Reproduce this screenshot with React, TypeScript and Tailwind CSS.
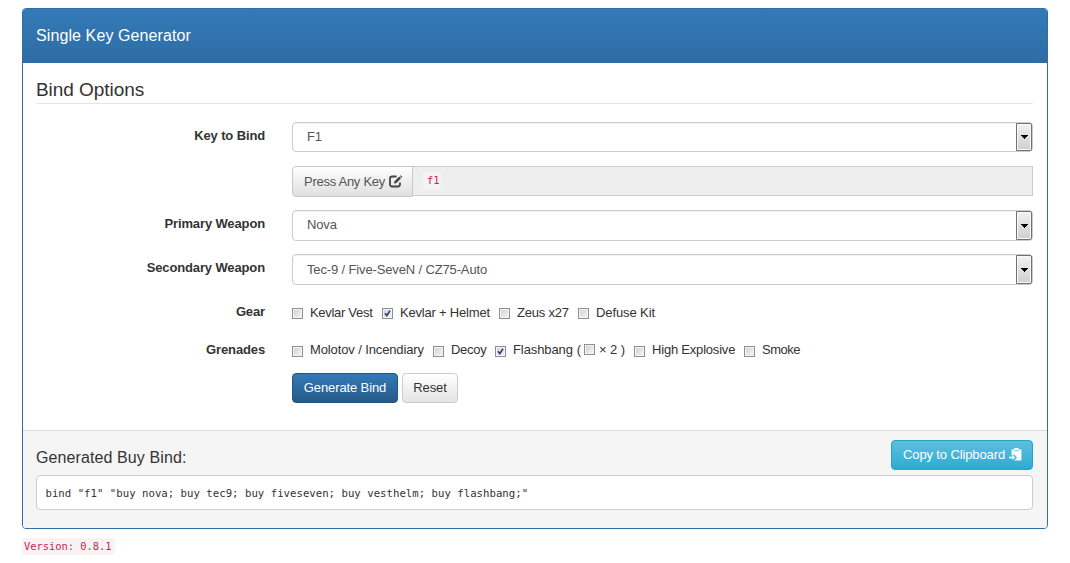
import * as React from "react";
import { clsx } from "clsx";

type Option = {
  label: string;
  width: string;
  tracking?: string;
  checked?: boolean;
};

const GEAR: Option[] = [
  { label: "Kevlar Vest", width: "w-[90px]", tracking: "tracking-[-0.3px]" },
  { label: "Kevlar + Helmet", width: "w-[117px]", tracking: "tracking-[-0.2px]", checked: true },
  { label: "Zeus x27", width: "w-[79px]", tracking: "tracking-[-0.2px]" },
  { label: "Defuse Kit", width: "w-[90px]", tracking: "tracking-[-0.1px]" },
];

const GRENADES: Option[] = [
  { label: "Molotov / Incendiary", width: "w-[141px]", tracking: "tracking-[-0.12px]" },
  { label: "Decoy", width: "w-[62px]", tracking: "tracking-[-0.3px]" },
  { label: "Flashbang", width: "w-[139px]", tracking: "tracking-[-0.1px]", checked: true },
  { label: "High Explosive", width: "w-[110px]", tracking: "tracking-[-0.2px]" },
  { label: "Smoke", width: "w-[70px]", tracking: "tracking-[-0.5px]" },
];

export default function App() {
  return (
    <main className="h-[563px] w-[1070px] overflow-hidden bg-white pt-2 pl-[22px] font-['Liberation_Sans',Arial,sans-serif] text-[13px] leading-[18px] text-[#333]">
      <section className="h-[521px] w-[1026px] overflow-hidden rounded-[4px] border border-[#2f6da4]">
        <header className="h-[54px] bg-linear-to-b from-[#337ab7] to-[#2e6da4] px-[13px] pt-[17px] text-[16px] leading-5 tracking-[0.1px] text-white">
          Single Key Generator
        </header>

        <div className="h-[367px] bg-white px-[13px] pt-[15px]">
          <h2 className="h-[26px] w-[997px] border-b border-[#e5e5e5] text-[19px] leading-[24px] tracking-[-0.05px]">
            Bind Options
          </h2>

          <Row label="Key to Bind" className="mt-[18px] h-[30px]">
            <Select value="F1" />
          </Row>
          <Row className="mt-[14px] h-[31px]">
            <div className="flex items-start">
              <button className="flex h-[31px] w-[121px] items-center rounded-l-[4px] border border-[#c8c8c8] bg-linear-to-b from-white to-[#e0e0e0] pl-[11px] text-[#555]">
                <span className="w-[85px] text-left tracking-[-0.27px] whitespace-nowrap">
                  Press Any Key
                </span>
                <EditIcon />
              </button>
              <div className="h-[30px] flex-1 border border-l-0 border-[#ccc] bg-[#eee] pt-[5px] pl-[10px]">
                <Code className="h-[17px] w-[18px] px-[4px]">f1</Code>
              </div>
            </div>
          </Row>
          <Row label="Primary Weapon" className="mt-[13px] h-[31px]">
            <Select value="Nova" />
          </Row>
          <Row label="Secondary Weapon" className="mt-[13px] h-[31px]">
            <Select value="Tec-9 / Five-SeveN / CZ75-Auto" className="pt-[6px]" />
          </Row>
          <Row label="Gear" className="mt-[13px] h-[31px]">
            <Options options={GEAR} className="pt-[6px]" />
          </Row>
          <Row label="Grenades" className="mt-[7px] h-[31px]">
            <Options options={GRENADES} className="pt-[5px]" checkClass="mt-[5px]" />
          </Row>

          <div className="mt-[6px] flex gap-1 pl-[256px]">
            <button className="h-[30px] w-[106px] rounded-[4px] border border-[#245580] bg-linear-to-b from-[#337ab7] to-[#265a88] tracking-[-0.12px] whitespace-nowrap text-white">
              Generate Bind
            </button>
            <button className="h-[30px] w-[56px] rounded-[4px] border border-[#ccc] bg-linear-to-b from-white to-[#e4e4e4] tracking-[-0.1px]">
              Reset
            </button>
          </div>
        </div>

        <footer className="h-[98px] border-t border-[#ddd] bg-[#f5f5f5] px-[13px] pt-[9px]">
          <div className="flex w-[997px] items-start justify-between">
            <h3 className="pt-[8px] text-[16px] leading-5 tracking-[0.1px]">Generated Buy Bind:</h3>
            <button className="flex h-[30px] w-[142px] items-center rounded-[4px] border border-[#28a4c9] bg-linear-to-b from-[#5bc0de] to-[#2aabd2] pl-[11px] text-white">
              <span className="w-[106px] text-left tracking-[-0.12px] whitespace-nowrap">
                Copy to Clipboard
              </span>
              <PasteIcon />
            </button>
          </div>
          <pre className="mt-[5px] h-[35px] w-[997px] rounded-[4px] border border-[#ccc] bg-white pt-[10px] pl-[8.5px] font-['DejaVu_Sans_Mono',monospace] text-[10.7px] leading-4">
            {'bind "f1" "buy nova; buy tec9; buy fiveseven; buy vesthelm; buy flashbang;"'}
          </pre>
        </footer>
      </section>

      <Code className="mt-[9px] h-[17px] w-[93px] px-[2px]">Version: 0.8.1</Code>
    </main>
  );
}

function Row({
  label,
  className,
  children,
}: {
  label?: string;
  className: string;
  children: React.ReactNode;
}) {
  return (
    <div className={clsx("grid grid-cols-[229px_741px] gap-[27px]", className)}>
      <div className="pt-[5px] text-right font-bold tracking-[-0.13px]">{label}</div>
      {children}
    </div>
  );
}

function Select({ value, className = "pt-[5px]" }: { value: string; className?: string }) {
  return (
    <div className="flex h-full items-stretch justify-between rounded-[4px] border border-[#ccc] bg-white shadow-[inset_0_1px_1px_rgba(0,0,0,0.06)]">
      <span className={clsx("pl-[14px] tracking-[-0.14px] text-[#555]", className)}>{value}</span>
      <span className="flex w-[16px] items-center justify-center rounded-r-[2px] border border-[#707070] bg-linear-to-b from-[#f2f2f2] to-[#cfcfcf] shadow-[inset_0_0_0_1px_#fafafa]">
        <svg width="7" height="4" viewBox="0 0 7 4" shapeRendering="crispEdges">
          <path d="M0 0h7v1h-1v1h-1v1h-1v1h-1v-1h-1v-1h-1v-1h-1z" fill="#000" />
        </svg>
      </span>
    </div>
  );
}

function Options({
  options,
  className,
  checkClass = "mt-[4px]",
}: {
  options: Option[];
  className: string;
  checkClass?: string;
}) {
  return (
    <div className={clsx("flex", className)}>
      {options.map((o) => (
        <label key={o.label} className={clsx("flex whitespace-nowrap", o.width, o.tracking)}>
          <Check checked={o.checked} className={clsx("mr-[7px]", checkClass)} />
          {o.label}
          {o.label === "Flashbang" && (
            <>
              <span className="ml-[4px]">(</span>
              <Check className="mt-[3px] mr-[4px] ml-[3px]" />
              × 2 )
            </>
          )}
        </label>
      ))}
    </div>
  );
}

function Check({ checked, className }: { checked?: boolean; className: string }) {
  return (
    <span
      className={clsx(
        "flex size-[11px] shrink-0 items-center justify-center border border-[#8e8f8f] bg-linear-to-br from-[#cdd0d4] to-[#f6f6f6] shadow-[inset_0_0_0_1px_#f4f4f4]",
        className
      )}
    >
      {checked && (
        <svg width="7" height="7" viewBox="0 0 7 7" fill="none" stroke="#2b3f72" strokeWidth="1.6">
          <path d="M1 3.2 2.8 5.6 6 .8" />
        </svg>
      )}
    </span>
  );
}

function Code({ className, children }: { className: string; children: React.ReactNode }) {
  return (
    <code
      className={clsx(
        "block rounded-[3px] bg-[#f9f2f4] font-['DejaVu_Sans_Mono',monospace] text-[10.4px] leading-[17px] whitespace-nowrap text-[#c7254e]",
        className
      )}
    >
      {children}
    </code>
  );
}

function EditIcon() {
  return (
    <svg width="14" height="13" viewBox="0 0 14 13" fill="none" stroke="#444">
      <path d="M7.6 1.5H3.2A2.2 2.2 0 0 0 1 3.7v5.6a2.2 2.2 0 0 0 2.2 2.2h5.6A2.2 2.2 0 0 0 11 9.3V7.6" strokeWidth="1.8" />
      <path d="M5 8.7 5.6 6.2 10.2 1.6 12 3.4 7.4 8Z" fill="#444" stroke="none" />
      <path d="M10.8 1 11.6.2 13.4 2 12.6 2.8Z" fill="#444" stroke="none" />
    </svg>
  );
}

function PasteIcon() {
  return (
    <svg width="13" height="13" viewBox="0 0 13 13" fill="#fff" className="mb-[2px]">
      <path d="M2.6 1.500H5V.8C5 .3 5.400 0 6 0h2.600c.6 0 1 .3 1 .8v.7H12.400V12.500H5.400L8 9.400 4.700 6V7.200H2.600Z" />
      <path d="M5 2.700h4.700" stroke="#43b3d5" strokeWidth=".8" />
      <path d="M0 8.800h3.300V6.900L6.300 9.400 3.300 12V10.200H0Z" />
    </svg>
  );
}
